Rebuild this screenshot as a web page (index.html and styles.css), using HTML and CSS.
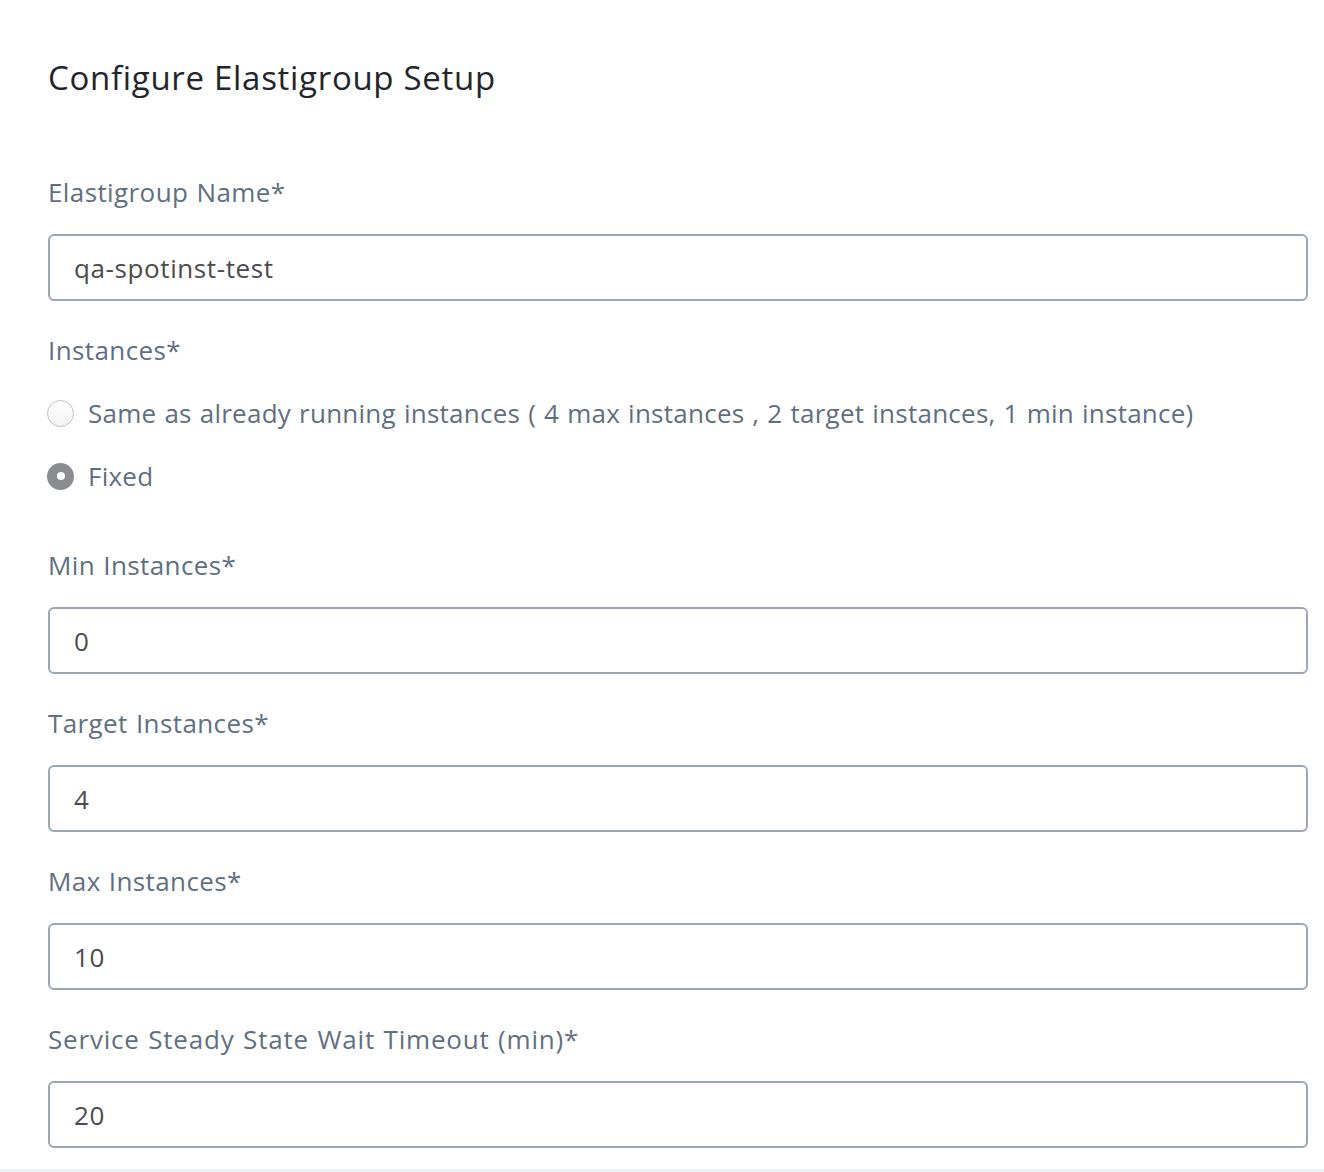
FILE: index.html
```html
<!DOCTYPE html>
<html>
<head>
<meta charset="utf-8">
<link rel="stylesheet" href="styles.css">
</head>
<body>
<div class="page">
  <h1 class="title">Configure Elastigroup Setup</h1>
  <div class="field first">
    <div class="label">Elastigroup Name*</div>
    <div class="input">qa-spotinst-test</div>
  </div>
  <div class="field">
    <div class="label">Instances*</div>
    <div class="radios">
      <div class="radio-row"><span class="radio"></span><span class="radio-text">Same as already running instances ( 4 max instances , 2 target instances, 1 min instance)</span></div>
      <div class="radio-row"><span class="radio checked"></span><span class="radio-text">Fixed</span></div>
    </div>
  </div>
  <div class="field spaced">
    <div class="label">Min Instances*</div>
    <div class="input">0</div>
  </div>
  <div class="field">
    <div class="label">Target Instances*</div>
    <div class="input">4</div>
  </div>
  <div class="field">
    <div class="label">Max Instances*</div>
    <div class="input">10</div>
  </div>
  <div class="field">
    <div class="label wide">Service Steady State Wait Timeout (min)*</div>
    <div class="input">20</div>
  </div>
</div>
<div class="footer-strip"></div>
</body>
</html>
```
FILE: styles.css
```css
html, body {
  margin: 0;
  padding: 0;
  background: #ffffff;
}
body {
  width: 1324px;
  height: 1172px;
  overflow: hidden;
  position: relative;
  font-family: "Open Sans", "Lato", sans-serif;
}
.page {
  padding: 58px 16px 0 48px;
}
.title {
  margin: 0;
  font-size: 33px;
  line-height: 40px;
  font-weight: 400;
  letter-spacing: 0.7px;
  color: #23252d;
}
.field {
  margin-top: 33px;
}
.field.first {
  margin-top: 78px;
}
.field.spaced {
  margin-top: 53px;
}
.label {
  font-size: 26px;
  line-height: 32px;
  letter-spacing: 0.4px;
  word-spacing: 1px;
  color: #5f6f82;
  margin-bottom: 26px;
}
.label.wide {
  letter-spacing: 0.8px;
}
.input {
  box-sizing: border-box;
  height: 67px;
  border: 2px solid #9ca7b6;
  border-radius: 6px;
  padding: 0 24px;
  display: flex;
  align-items: center;
  font-size: 26px;
  letter-spacing: 0.6px;
  color: #4b4b4f;
}
.radios {
  margin-top: -26px;
  display: flex;
  flex-direction: column;
  gap: 23px;
  padding-top: 27px;
}
.radio-row {
  height: 40px;
  display: flex;
  align-items: center;
}
.radio {
  box-sizing: border-box;
  width: 27px;
  height: 27px;
  border-radius: 50%;
  border: 1.5px solid #bfc1c5;
  background: linear-gradient(#ffffff, #f3f3f4);
  margin-left: -1px;
  margin-right: 14px;
  flex: none;
  position: relative;
}
.radio.checked {
  border: none;
  background: #8b8c92;
}
.radio.checked::after {
  content: "";
  position: absolute;
  left: 50%;
  top: 50%;
  width: 8px;
  height: 8px;
  margin: -4px 0 0 -4px;
  border-radius: 50%;
  background: #ffffff;
}
.radio-text {
  font-size: 26px;
  letter-spacing: 0.25px;
  word-spacing: 1px;
  color: #5f6f82;
}
.footer-strip {
  position: absolute;
  left: 0;
  right: 0;
  bottom: 0;
  height: 3px;
  background: #eef1f5;
}
```
